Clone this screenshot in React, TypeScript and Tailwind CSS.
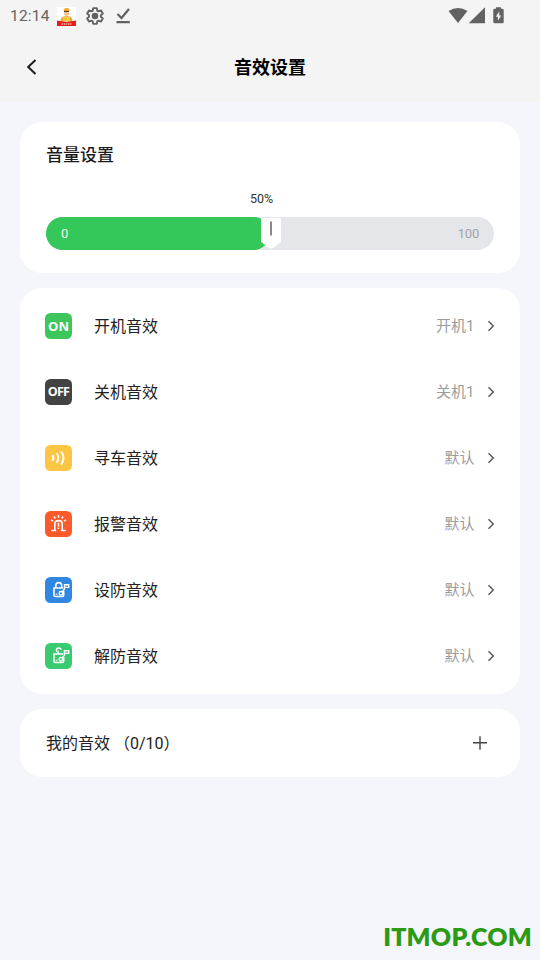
import type { ReactNode } from 'react'

type Row = {
  label: string
  value: string
  icon: ReactNode
}

function Badge({ fill, children }: { fill: string; children: ReactNode }) {
  return (
    <svg width="27" height="26" viewBox="0 0 27 26" fill="none" stroke="#fff" className="block shrink-0">
      <rect width="27" height="26" rx="5.5" fill={fill} stroke="none" />
      {children}
    </svg>
  )
}

function TextBadge({ className, children }: { className: string; children: string }) {
  return (
    <span
      className={`flex h-[26px] w-[27px] shrink-0 items-center justify-center rounded-[5.5px] font-['Open_Sans',sans-serif] leading-[26px] font-bold text-white ${className}`}
    >
      {children}
    </span>
  )
}

// Lock body with the key sticking out to the right
function LockBody() {
  return (
    <>
      <path d="M18.3 11H9v7q0 1.5 1.5 1.5h6.6q1.6 0 1.6-1.5v-4" strokeWidth="1.6" />
      <circle cx="15.9" cy="16.3" r="1.8" strokeWidth="1.3" />
      <path d="M17.1 15 19.5 12V7.8h4.2v2.6h-4.2" strokeWidth="1.4" />
      <path d="M10.6 17.2h1.9" strokeWidth="1" />
    </>
  )
}

const rows: Row[] = [
  {
    label: '开机音效',
    value: '开机1',
    icon: <TextBadge className="bg-[#3cc65b] text-[13px]">ON</TextBadge>,
  },
  {
    label: '关机音效',
    value: '关机1',
    icon: <TextBadge className="bg-[#434344] text-[12.5px] tracking-[-0.7px]">OFF</TextBadge>,
  },
  {
    label: '寻车音效',
    value: '默认',
    icon: (
      <Badge fill="#fdc544">
        <path d="M7.4 10.2q2 2.8 0 5.6" strokeWidth="2" />
        <path d="M11.6 8.2q3.6 4.8 0 9.6" strokeWidth="1.9" />
        <path d="M16 6.4q5 6.6 0 13.2" strokeWidth="1.9" />
      </Badge>
    ),
  },
  {
    label: '报警音效',
    value: '默认',
    icon: (
      <Badge fill="#fc5a2b">
        <path d="M9.8 19v-5.8q0-3.6 3.7-3.6t3.7 3.6V19" strokeWidth="1.6" />
        <path d="M6.2 19.4h5M15.8 19.4h5M13.5 4v2.8M9 5.5l1.3 2M18 5.5l-1.3 2M6 8.9l2.2 1.3M21 8.9l-2.2 1.3" strokeWidth="1.5" />
        <path d="M13.5 11.8v3.6M13.5 16.6v1.5" strokeWidth="1.5" />
      </Badge>
    ),
  },
  {
    label: '设防音效',
    value: '默认',
    icon: (
      <Badge fill="#3087e2">
        <path d="M10.8 10.8V8.6q0-3 2.9-3t2.9 3v2.2" strokeWidth="1.6" />
        <LockBody />
      </Badge>
    ),
  },
  {
    label: '解防音效',
    value: '默认',
    icon: (
      <Badge fill="#3acb71">
        <path d="M13.2 11V9q-1.8-.3-1.8-1.8 0-2.3 2.3-2.3 1.9 0 2.5 1.9" strokeWidth="1.5" />
        <LockBody />
      </Badge>
    ),
  },
]

function StatusBar() {
  return (
    <div className="flex h-8 items-center pl-2.5 text-[#626262]">
      <span className="w-[47px] text-[15.5px] leading-4 tracking-[0.2px]">12:14</span>
      {/* running app */}
      <svg width="19" height="19" viewBox="0 0 19 19" className="shrink-0">
        <path fill="#fff" d="M0 0h19v19H0z" />
        <path fill="#e8a42d" d="M3.5 14.5q0-4.8 4-5.3h4q4 .5 4 5.3z" />
        <path fill="#f8c83f" d="M6 10h7v4H6z" />
        <path fill="#f5c49d" d="M7 3h5v4.5q-2.5 3-5 0z" />
        <path fill="#4b3326" d="M7 4h5v1H7z" />
        <path fill="#f2a522" d="M6.6 4q0-3 3-3t3 3z" />
        <path fill="#e31e18" d="M0 13.5 9.5 15l9.5-1.5V19H0z" />
        <path stroke="#fff" strokeWidth="1.2" strokeDasharray="1.5 .7" d="M4.5 17h10" />
      </svg>
      <svg width="20" height="20" viewBox="0 0 24 24" fill="none" stroke="currentColor" strokeWidth="2.3" strokeLinejoin="round" className="ml-[9px] shrink-0">
        <path d="M9.8 2.5h4.4l.5 3 1.6.9 2.9-1.1 2.2 3.8-2.3 1.9v2l2.3 1.9-2.2 3.8-2.9-1.1-1.6.9-.5 3H9.8l-.5-3-1.6-.9-2.9 1.1-2.2-3.8L4.9 13v-2L2.6 9.1l2.2-3.8 2.9 1.1 1.6-.9z" />
        <circle cx="12" cy="12" r="2.8" fill="currentColor" />
      </svg>
      <svg width="16" height="18" viewBox="0 0 16 18" fill="none" stroke="currentColor" strokeWidth="2.2" className="ml-[11px] shrink-0">
        <path d="m1.5 7 4 4 7.5-9M.5 15.2h13.3" />
      </svg>
      <div className="ml-auto flex items-center pr-[36px]">
        <svg width="20" height="18" viewBox="0 0 20 18" fill="currentColor"><path d="M.5 4.1Q10-2.1 19.5 4.1L10 16z" /></svg>
        <svg width="17" height="18" viewBox="0 0 17 18" fill="currentColor"><path d="M17 .3v16H.7z" /></svg>
        <svg width="11" height="18" viewBox="0 0 11 18" fill="currentColor" className="ml-[8px]">
          <path d="M3 .2h5v1.6h1.5q1.2 0 1.2 1.2v12.1q0 1.2-1.2 1.2h-8Q.3 16.3.3 15.1V3q0-1.2 1.2-1.2H3z" />
          <path fill="#f4f4f4" d="M6.2 4.5 2.8 9.8h2.1v4l3.3-5.3h-2z" />
        </svg>
      </div>
    </div>
  )
}

function VolumeCard() {
  const volume = 50

  return (
    <section className="h-[151px] rounded-[22px] bg-white px-[26px] pt-[21px]">
      <h2 className="text-[17px] leading-[25px] font-medium text-[#1c1c1c]">音量设置</h2>
      <p className="mt-[23px] h-4 pr-[17px] text-center text-[12.5px] leading-4 text-[#333]">{volume}%</p>
      <div className="relative mt-[10px] flex h-[33px] items-center justify-between rounded-full bg-[#e5e6ea] px-[15px] text-[13px]">
        <div className="absolute inset-y-0 left-0 rounded-full bg-[#34c759]" style={{ width: `${volume}%` }} />
        <span className="relative text-white/90">0</span>
        <span className="tracking-[-0.2px] text-[#a2a3a7]">100</span>
        <svg width="20" height="32" viewBox="0 0 20 32" className="absolute top-[1px] -translate-x-[9px]" style={{ left: `${volume}%` }}>
          <path fill="#fff" d="M1 0h18q1 0 1 1v22q0 1-.8 1.6l-6.5 5q-2.7 1.7-5.4 0L.8 24.6Q0 24 0 23V1q0-1 1-1z" />
          <path fill="#888" d="M9 3.5h2v14H9z" />
        </svg>
      </div>
    </section>
  )
}

export default function App() {
  return (
    <div className="flex h-[960px] w-[540px] flex-col overflow-hidden bg-[#f5f6fb] font-[Roboto,'Noto_Sans_CJK_SC',sans-serif]">
      <header className="h-[102px] shrink-0 bg-[#f4f4f4]">
        <StatusBar />
        <div className="grid h-[70px] grid-cols-[1fr_auto_1fr] items-center">
          <svg width="12" height="18" viewBox="0 0 12 18" fill="none" stroke="#1c1c1c" strokeWidth="2" className="ml-[26px]">
            <path d="M9.5 2 2.2 9l7.3 7" />
          </svg>
          <h1 className="pt-px text-[18px] leading-[26px] font-bold text-black">音效设置</h1>
        </div>
      </header>

      <main className="flex flex-col gap-[15px] px-5 pt-5">
        <VolumeCard />

        <ul className="rounded-[22px] bg-white py-[5px] pr-[25px] pl-[25px]">
          {rows.map(row => (
            <li key={row.label} className="flex h-[66px] items-center">
              {row.icon}
              <span className="ml-[22px] pt-0.5 text-[16px] text-[#222]">{row.label}</span>
              <span className="ml-auto text-[15px] text-[#9b9b9b]">{row.value}</span>
              <svg width="8" height="12" viewBox="0 0 8 12" fill="none" stroke="#555" strokeWidth="1.4" className="ml-[12.5px]">
                <path d="m1.5 1.2 4.8 4.8-4.8 4.8" />
              </svg>
            </li>
          ))}
        </ul>

        <section className="flex h-[68px] items-center justify-between rounded-[22px] bg-white pr-[33px] pl-[26px]">
          <span className="pt-0.5 text-[16px] text-[#222]">我的音效 （0/10）</span>
          <svg width="14" height="14" viewBox="0 0 14 14" fill="none" stroke="#444" strokeWidth="1.4">
            <path d="M7 .3v13.4M0 6.7h14" />
          </svg>
        </section>
      </main>

      <footer className="mt-auto pr-[8px] pb-[9px] text-right font-[Lato,sans-serif] text-[25px] leading-[30px] font-extrabold tracking-[0.2px] text-[#2b9a14]">
        ITMOP.COM
      </footer>
    </div>
  )
}
